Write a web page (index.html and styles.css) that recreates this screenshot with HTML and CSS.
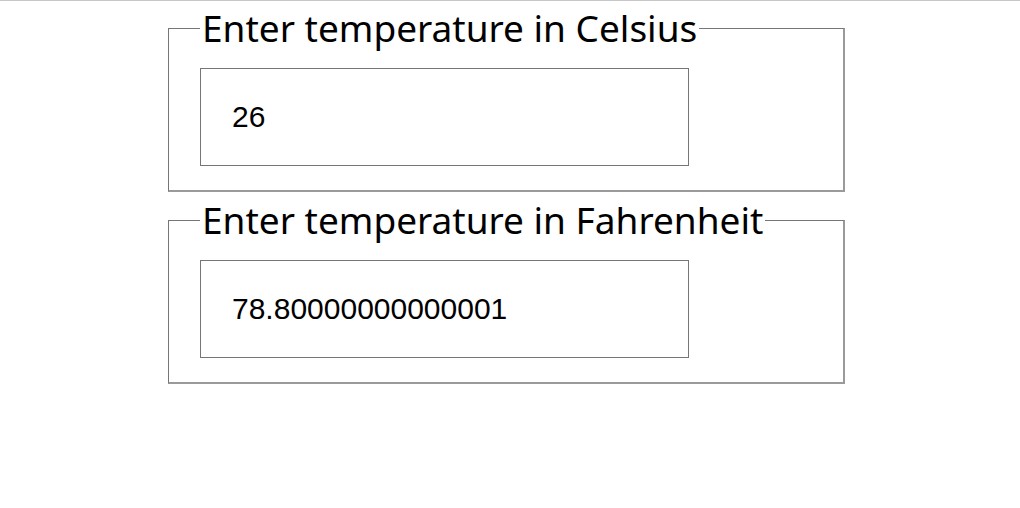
FILE: index.html
```html
<!DOCTYPE html>
<html>
<head>
<meta charset="utf-8">
<link rel="stylesheet" href="styles.css">
</head>
<body>
<div class="topline"></div>
<main class="page">
  <fieldset class="box">
    <legend class="label">Enter temperature in Celsius</legend>
    <input class="field" type="text" value="26">
  </fieldset>
  <fieldset class="box">
    <legend class="label">Enter temperature in Fahrenheit</legend>
    <input class="field" type="text" value="78.80000000000001">
  </fieldset>
</main>
</body>
</html>
```
FILE: styles.css
```css
html, body {
  margin: 0;
  padding: 0;
  background: #fff;
}
.topline {
  height: 1px;
  background: #c8c8c8;
}
.page {
  display: flex;
  flex-direction: column;
  gap: 6px;
  padding: 5px 0 0 168px;
}
.box {
  box-sizing: border-box;
  width: 677px;
  margin: 0;
  padding: 0 30px 24px 31px;
  border-style: solid;
  border-width: 1px 2px 2px 1px;
  border-color: #767676 #9a9a9a #9a9a9a #767676;
}
.label {
  padding: 0 2px 0 2px;
  font-family: "Noto Sans", "Open Sans", sans-serif;
  font-size: 37px;
  line-height: 44px;
  color: #000;
}
.field {
  display: block;
  box-sizing: border-box;
  width: 489px;
  height: 98px;
  margin: 18px 0 0 0;
  padding: 0 0 0 31px;
  border: 1px solid #767676;
  border-radius: 0;
  font-family: "Liberation Sans", Arial, sans-serif;
  font-size: 30px;
  color: #000;
  outline: none;
}
```
